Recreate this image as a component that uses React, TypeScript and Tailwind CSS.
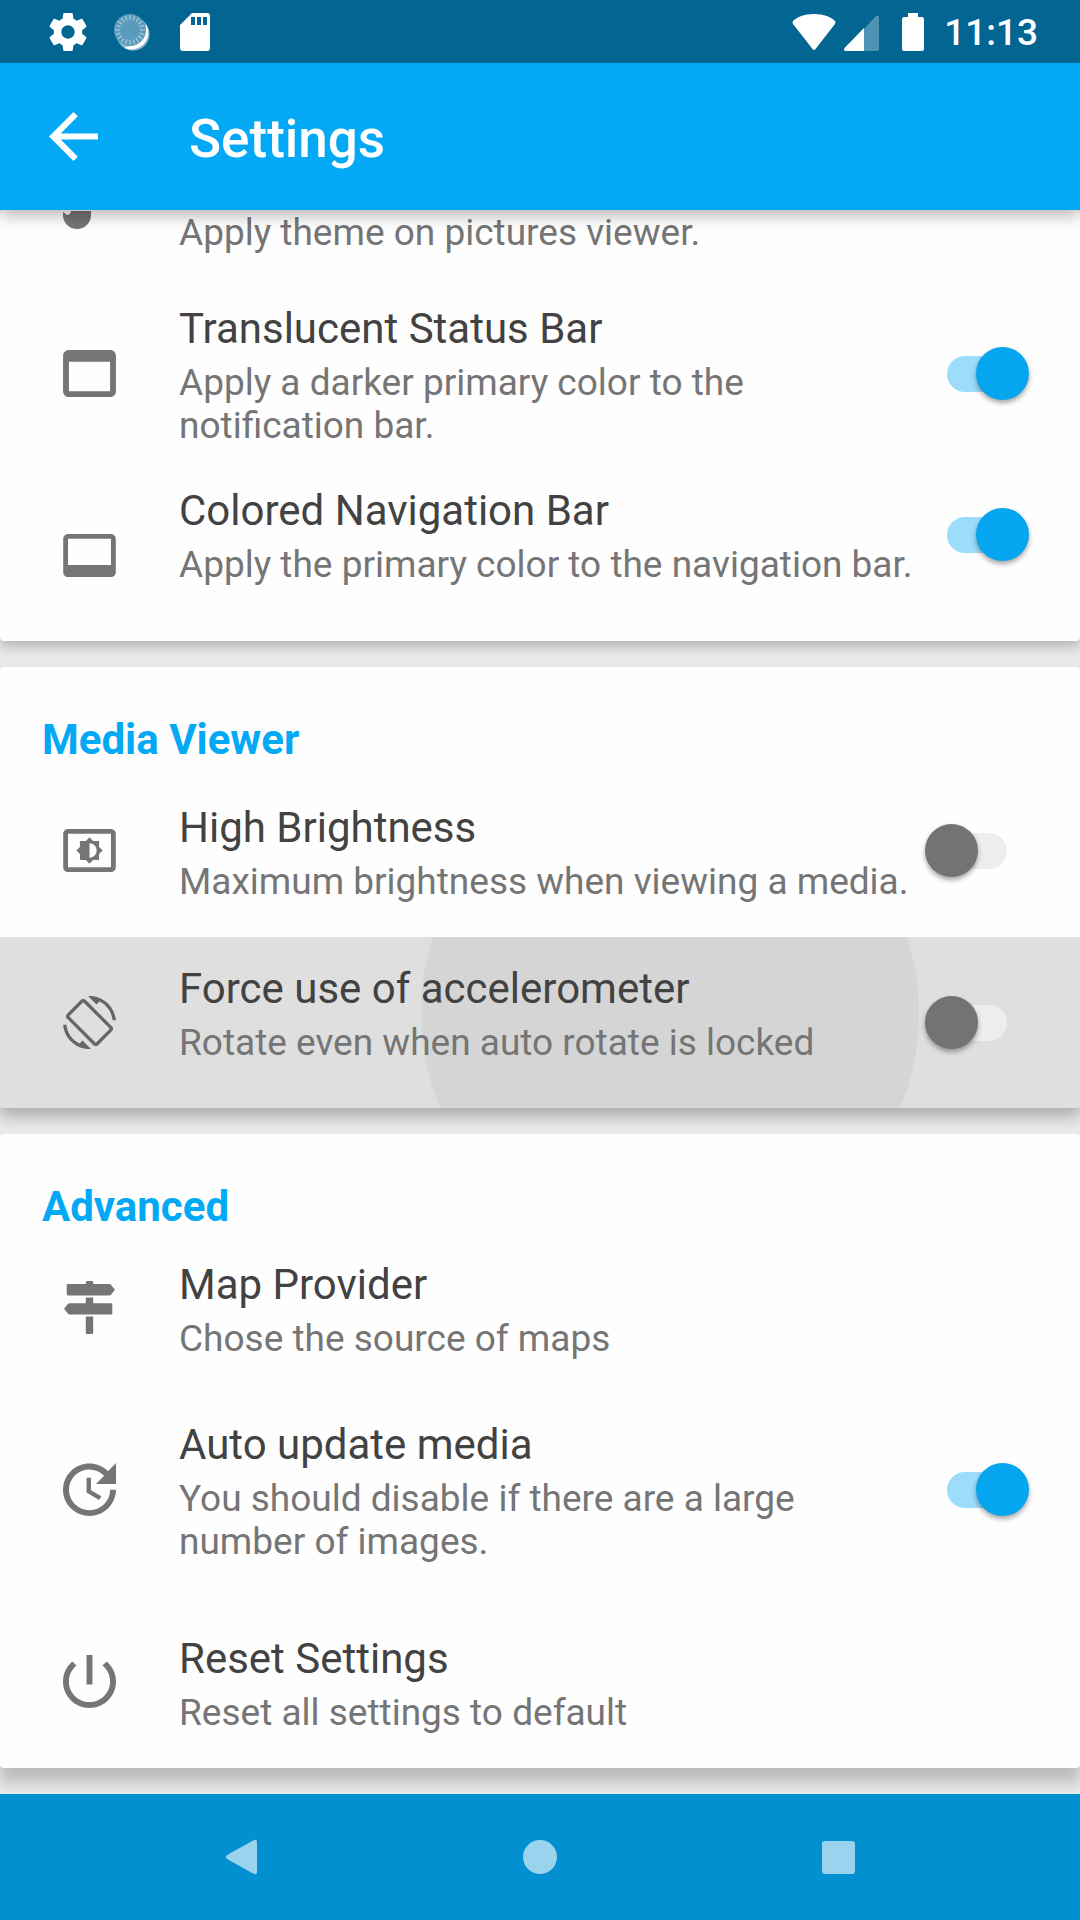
import { useState, type ReactNode } from "react";

type IconProps = { viewBox: string; className: string; children: ReactNode };

function Glyph({ viewBox, className, children }: IconProps) {
  return (
    <svg viewBox={viewBox} className={className} fill="currentColor" aria-hidden="true">
      {children}
    </svg>
  );
}

const icons = {
  statusBar: (
    <Glyph viewBox="3 4 18 16" className="h-[47px] w-[53px]">
      <path d="M19 4H5c-1.11 0-2 .9-2 2v12c0 1.1.89 2 2 2h14c1.1 0 2-.9 2-2V6c0-1.1-.89-2-2-2zm0 14H5V8h14v10z" />
    </Glyph>
  ),
  navigationBar: (
    <Glyph viewBox="1 3 22 18" className="h-[43px] w-[53px]">
      <path d="M21 3H3c-1.1 0-2 .9-2 2v14c0 1.1.9 2 2 2h18c1.1 0 2-.9 2-2V5c0-1.1-.9-2-2-2zm0 13H3V5h18v11z" />
    </Glyph>
  ),
  brightness: (
    <Glyph viewBox="1 3 22 18" className="h-[43px] w-[53px]">
      <path d="M21 3H3c-1.1 0-2 .9-2 2v14c0 1.1.9 2 2 2h18c1.1 0 2-.9 2-2V5c0-1.1-.9-2-2-2zm0 16.01H3V4.99h18v14.02zM8 16h2.5l1.5 1.5 1.5-1.5H16v-2.5l1.5-1.5-1.5-1.5V8h-2.5L12 6.5 10.5 8H8v2.5L6.5 12 8 13.5V16zm4-7c1.66 0 3 1.34 3 3s-1.34 3-3 3V9z" />
    </Glyph>
  ),
  rotation: (
    <Glyph viewBox="0 0 24 24" className="size-[53px]">
      <path d="M16.48 2.52c3.27 1.55 5.61 4.72 5.97 8.48h1.5C23.44 4.84 18.29 0 12 0l-.66.03 3.81 3.81 1.33-1.32zm-6.25-.77c-.59-.59-1.54-.59-2.12 0L1.75 8.11c-.59.59-.59 1.54 0 2.12l12.02 12.02c.59.59 1.54.59 2.12 0l6.36-6.36c.59-.59.59-1.54 0-2.12L10.23 1.75zm4.6 19.44L2.81 9.17l6.36-6.36 12.02 12.02-6.36 6.36zm-7.31.29C4.25 19.94 1.91 16.76 1.55 13H.05C.56 19.16 5.71 24 12 24l.66-.03-3.81-3.81-1.33 1.32z" />
    </Glyph>
  ),
  signpost: (
    <Glyph viewBox="-3 0 158 158" className="size-[53px]">
      <path d="M69 0h14q4 0 4 4v5h48q3 0 5 2l12 15-12 15q-2 2-5 2H12q-4 0-4-4V13q0-4 4-4h53V4q0-4 4-4z" />
      <path d="M65 49h22v17h53q4 0 4 4v26q0 4-4 4H17q-3 0-5-2L0 83l12-15q2-2 5-2h48z" />
      <path d="M65 106h22v48q0 4-4 4H69q-4 0-4-4z" />
    </Glyph>
  ),
  update: (
    <Glyph viewBox="3 3 18 18" className="size-[53px]">
      <path d="M21 10.12h-6.78l2.74-2.82c-2.73-2.7-7.15-2.8-9.88-.1-2.73 2.71-2.73 7.08 0 9.79s7.15 2.71 9.88 0C18.32 15.65 19 14.08 19 12.1h2c0 1.98-.88 4.55-2.64 6.29-3.51 3.48-9.21 3.48-12.72 0-3.5-3.47-3.53-9.11-.02-12.58s9.14-3.47 12.65 0L21 3v7.12zM12.5 8v4.25l3.5 2.08-.72 1.21L11 13V8h1.5z" />
    </Glyph>
  ),
  power: (
    <Glyph viewBox="3 3 18 18" className="size-[53px]">
      <path d="M13 3h-2v10h2V3zm4.83 2.17l-1.42 1.42C17.99 7.86 19 9.81 19 12c0 3.87-3.13 7-7 7s-7-3.13-7-7c0-2.19 1.01-4.14 2.58-5.42L6.17 5.17C4.23 6.82 3 9.26 3 12c0 4.97 4.03 9 9 9s9-4.03 9-9c0-2.74-1.23-5.18-3.17-6.83z" />
    </Glyph>
  ),
};

function StatusBar() {
  const ticks = Array.from({ length: 20 }, (_, i) => i * 18);
  return (
    <div className="flex h-[63px] items-center justify-between bg-[#026592] pr-[42px] pl-[49px] text-white">
      <div className="flex items-center gap-[27px]">
        <Glyph viewBox="2 2 20 20" className="size-[38px]">
          <path d="M19.43 12.98c.04-.32.07-.64.07-.98s-.03-.66-.07-.98l2.11-1.65c.19-.15.24-.42.12-.64l-2-3.46c-.12-.22-.39-.3-.61-.22l-2.49 1c-.52-.4-1.08-.73-1.69-.98l-.38-2.65C14.46 2.18 14.25 2 14 2h-4c-.25 0-.46.18-.49.42l-.38 2.65c-.61.25-1.17.59-1.69.98l-2.49-1c-.23-.09-.49 0-.61.22l-2 3.46c-.13.22-.07.49.12.64l2.11 1.65c-.04.32-.07.65-.07.98s.03.66.07.98l-2.11 1.65c-.19.15-.24.42-.12.64l2 3.46c.12.22.39.3.61.22l2.49-1c.52.4 1.08.73 1.69.98l.38 2.65c.03.24.24.42.49.42h4c.25 0 .46-.18.49-.42l.38-2.65c.61-.25 1.17-.59 1.69-.98l2.49 1c.23.09.49 0 .61-.22l2-3.46c.12-.22.07-.49-.12-.64l-2.11-1.65zM12 15.5c-1.93 0-3.5-1.57-3.5-3.5s1.57-3.5 3.5-3.5 3.5 1.57 3.5 3.5-1.57 3.5-3.5 3.5z" />
        </Glyph>
        <svg viewBox="0 0 38 38" className="size-[38px]" aria-hidden="true">
          <circle cx="19" cy="21" r="16.500" fill="#8fbcd2" />
          <path d="M32 13A16 16 0 0 1 11.500 34.500Q30.500 34 32 13z" fill="#fff" stroke="#fff" strokeWidth="1.500" />
          <circle cx="16" cy="17" r="16" fill="#5a9abb" />
          {ticks.map((angle) => (
            <path key={angle} d="M16 2v5" stroke="#a3c8da" strokeWidth="1.300" transform={`rotate(${angle} 16 17)`} />
          ))}
        </svg>
        <Glyph viewBox="0 0 38 38" className="size-[38px]">
          <path
            fillRule="evenodd"
            d="M13 0h15q3 0 3 3v32q0 3-3 3H4q-3 0-3-3V12zM12 4v8h4V4zm6 0v8h4V4zm6 0v8h4V4z"
          />
        </Glyph>
      </div>
      <div className="flex items-center">
        <Glyph viewBox="0 0 44 38" className="h-[38px] w-[44px]">
          <path d="M22 1C12 1 5 4 1 8q-1 2 0 3l19.500 25q1.500 2 3 0L43 11q1-1 0-3C39 4 32 1 22 1z" />
        </Glyph>
        <Glyph viewBox="0 0 35 38" className="ml-2 h-[38px] w-[35px]">
          <path d="M20 16L32 3q3-1 3 1v32q0 2-2 2H20z" opacity=".3" />
          <path d="M20 15v23H2q-3 0-1.500-3z" />
        </Glyph>
        <Glyph viewBox="0 0 22 38" className="ml-[23px] h-[38px] w-[22px]">
          <path d="M6 0h10v4h4q2 0 2 2v30q0 2-2 2H2q-2 0-2-2V6q0-2 2-2h4z" />
        </Glyph>
        <time className="ml-[20px] pt-[2px] text-[37px] leading-[43px] font-medium">11:13</time>
      </div>
    </div>
  );
}

function SwitchInput({ defaultOn, className }: { defaultOn: boolean; className: string }) {
  const [on, setOn] = useState(defaultOn);
  return (
    <span className={className}>
      <input
        type="checkbox"
        role="switch"
        checked={on}
        onChange={(e) => setOn(e.target.checked)}
        className="relative block h-[53px] w-[104px] cursor-pointer appearance-none before:absolute before:top-[9px] before:left-[22px] before:h-[36px] before:w-[60px] before:rounded-full before:bg-[#ededed] after:absolute after:top-0 after:left-0 after:size-[53px] after:rounded-full after:bg-[#737373] after:shadow-[0_3px_5px_rgba(0,0,0,0.35)] checked:before:bg-[#9cddfb] checked:after:left-[51px] checked:after:bg-[#05a5f0]"
      />
    </span>
  );
}

type RowProps = {
  icon: ReactNode;
  title: string;
  caption: string;
  padding: string;
  on?: boolean;
  switchClass?: string;
  pressed?: boolean;
};

function Row({ icon, title, caption, padding, on, switchClass = "", pressed = false }: RowProps) {
  const body = (
    <>
      {pressed && (
        <span className="absolute -top-[173px] left-[39%] size-[498px] rounded-full bg-[#d5d5d5]" />
      )}
      <span className={`relative flex w-[179px] shrink-0 pl-[63px] ${pressed ? "text-[#666666]" : "text-[#757575]"}`}>
        {icon}
      </span>
      <span className={`relative flex min-w-0 flex-1 flex-col gap-2 ${padding}`}>
        <span className="text-[42px] leading-[49px] text-[#424242]">{title}</span>
        <span className="text-[37px] leading-[43px] text-[#757575]">{caption}</span>
      </span>
    </>
  );
  if (on === undefined) {
    return (
      <button type="button" className="flex w-full cursor-pointer items-center pr-[51px] text-left">
        {body}
      </button>
    );
  }
  return (
    <label
      className={`relative flex cursor-pointer items-center overflow-hidden pr-[51px] ${pressed ? "rounded-b bg-[#dfdfdf]" : ""}`}
    >
      {body}
      <SwitchInput defaultOn={on} className={`relative ml-[10px] ${switchClass}`} />
    </label>
  );
}

function Card({ title, shadow, children }: { title?: string; shadow: string; children: ReactNode }) {
  return (
    <section className={`relative rounded bg-[#fefefe] ${shadow}`}>
      {title && (
        <h2 className="px-[42px] pt-[48px] text-[42px] leading-[49px] font-bold text-[#03a9f4]">{title}</h2>
      )}
      {children}
    </section>
  );
}

export default function App() {
  return (
    <div className="flex min-h-screen flex-col bg-[#e9e9e9] font-['Roboto',sans-serif]">
      <header className="relative z-10 shadow-[0_5px_16px_rgba(0,0,0,0.3)]">
        <StatusBar />
        <div className="flex h-[147px] items-center bg-[#03a9f4] text-white">
          <button type="button" aria-label="Back" className="flex w-[189px] cursor-pointer pl-[49px]">
            <Glyph viewBox="4 4 16 16" className="size-[49px]">
              <path d="M20 11H7.830l5.590-5.590L12 4l-8 8 8 8 1.410-1.410L7.830 13H20v-2z" />
            </Glyph>
          </button>
          <h1 className="pt-[6px] text-[53px] leading-[61px] font-medium">Settings</h1>
        </div>
      </header>

      <main className="flex flex-1 flex-col gap-[26px] pb-[26px]">
        <Card shadow="shadow-[0_5px_12px_rgba(0,0,0,0.24)]">
          <div className="flex pt-px pb-[23px]">
            <span className="w-[179px] shrink-0 pl-[63px] text-[#757575]">
              <Glyph viewBox="0 0 28 18" className="h-[18px] w-[28px]">
                <path d="M0 1l4 3q3 .5 4-4h20v4A14 14 0 0 1 0 4z" />
              </Glyph>
            </span>
            <p className="text-[37px] leading-[43px] text-[#757575]">Apply theme on pictures viewer.</p>
          </div>
          <Row
            icon={icons.statusBar}
            title="Translucent Status Bar"
            caption="Apply a darker primary color to the notification bar."
            padding="pt-[27px] pb-[22px]"
            on={true}
          />
          <Row
            icon={icons.navigationBar}
            title="Colored Navigation Bar"
            caption="Apply the primary color to the navigation bar."
            padding="pt-[17px] pb-[55px]"
            on={true}
            switchClass="pb-[42px]"
          />
        </Card>

        <Card title="Media Viewer" shadow="shadow-[0_9px_14px_rgba(0,0,0,0.25)]">
          <Row
            icon={icons.brightness}
            title="High Brightness"
            caption="Maximum brightness when viewing a media."
            padding="pt-[39px] pb-[34px]"
            on={false}
          />
          <Row
            icon={icons.rotation}
            title="Force use of accelerometer"
            caption="Rotate even when auto rotate is locked"
            padding="pt-[27px] pb-[44px]"
            on={false}
            pressed
          />
        </Card>

        <Card title="Advanced" shadow="shadow-[0_14px_14px_rgba(0,0,0,0.2)]">
          <Row
            icon={icons.signpost}
            title="Map Provider"
            caption="Chose the source of maps"
            padding="pt-[29px] pb-[23px]"
          />
          <Row
            icon={icons.update}
            title="Auto update media"
            caption="You should disable if there are a large number of images."
            padding="pt-[37px] pb-[32px]"
            on={true}
          />
          <Row
            icon={icons.power}
            title="Reset Settings"
            caption="Reset all settings to default"
            padding="pt-[39px] pb-[34px]"
          />
        </Card>
      </main>

      <nav className="relative z-10 flex h-[126px] justify-center bg-[#0390d0] text-[#9ad3ed]">
        <button type="button" aria-label="Navigate back" className="flex w-[298px] cursor-pointer items-center justify-center">
          <Glyph viewBox="0 0 32 36" className="h-[36px] w-[32px]">
            <path d="M28 1q3-1 3 2v30q0 3-3 2L1 20q-2-2 0-4z" />
          </Glyph>
        </button>
        <button type="button" aria-label="Home" className="flex w-[298px] cursor-pointer items-center justify-center">
          <span className="size-[34px] rounded-full bg-current" />
        </button>
        <button type="button" aria-label="Recent apps" className="flex w-[298px] cursor-pointer items-center justify-center">
          <span className="size-[33px] rounded-[3px] bg-current" />
        </button>
      </nav>
    </div>
  );
}
